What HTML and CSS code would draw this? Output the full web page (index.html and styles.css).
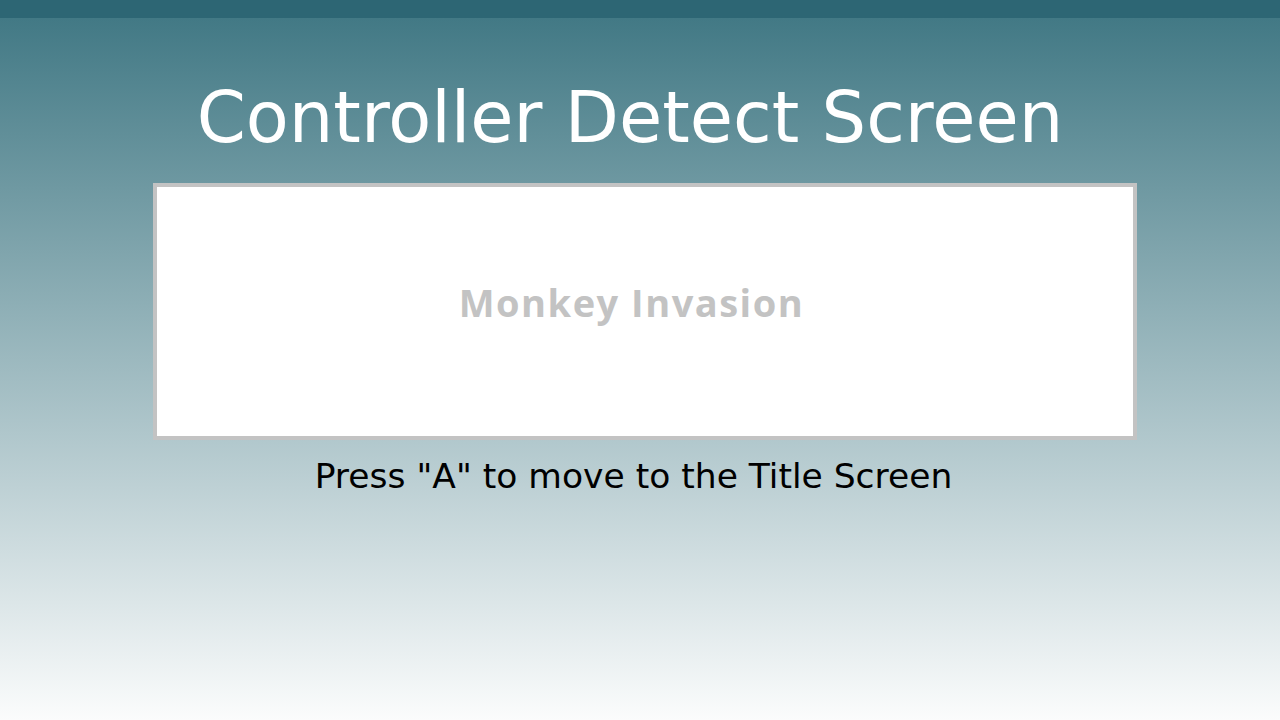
FILE: index.html
```html
<!DOCTYPE html>
<html>
<head>
<meta charset="utf-8">
<link rel="stylesheet" href="styles.css">
</head>
<body>
<div class="topbar"></div>
<main class="screen">
  <h1 class="title">Controller Detect Screen</h1>
  <div class="panel">
    <div class="game-name">Monkey Invasion</div>
  </div>
  <p class="hint">Press "A" to move to the Title Screen</p>
</main>
</body>
</html>
```
FILE: styles.css
```css
html, body {
  margin: 0;
  padding: 0;
  height: 100%;
}
body {
  display: flex;
  flex-direction: column;
  font-family: "DejaVu Sans", sans-serif;
  background: #fafbfb;
}
.topbar {
  height: 18px;
  background: #2d6674;
  flex: none;
}
.screen {
  flex: 1;
  display: flex;
  flex-direction: column;
  align-items: center;
  background: linear-gradient(to bottom, #427985 0%, #fbfcfc 100%);
}
.title {
  margin: 60px 20px 0 0;
  font-weight: normal;
  font-size: 70.3px;
  line-height: 81px;
  color: #ffffff;
}
.panel {
  margin: 24px 0 0 10px;
  width: 976px;
  height: 249px;
  border: 4px solid #c3c3c3;
  background: #ffffff;
  display: flex;
  align-items: center;
  justify-content: center;
}
.game-name {
  margin: 0 27px 20px 0;
  font-family: "Open Sans", sans-serif;
  font-weight: bold;
  font-size: 38px;
  letter-spacing: 1.5px;
  color: #c3c3c3;
}
.hint {
  margin: 16px 13px 0 0;
  font-size: 34.5px;
  line-height: 40px;
  color: #000000;
}
```
